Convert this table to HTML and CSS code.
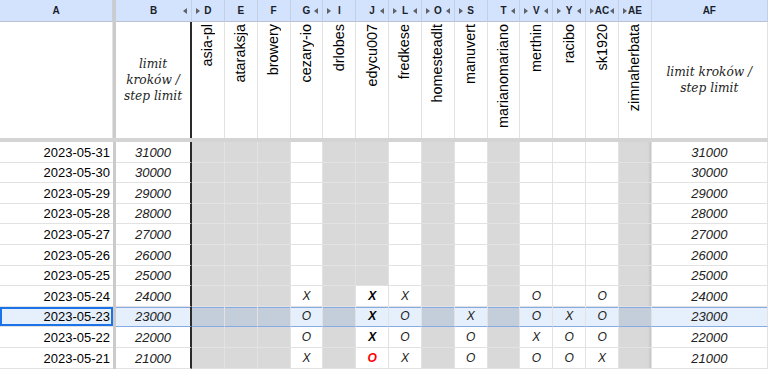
FILE: index.html
```html
<!DOCTYPE html>
<html>
<head>
<meta charset="utf-8">
<link rel="stylesheet" href="styles.css">
</head>
<body>
<div class="sheet">
  <div class="vsep"></div>
  <div class="hsep"></div>

  <div class="ch">A</div>
  <div class="ch">B<i class="tr"></i></div>
  <div class="ch"><i class="tl"></i>D</div>
  <div class="ch">E</div>
  <div class="ch">F</div>
  <div class="ch">G<i class="tr"></i></div>
  <div class="ch"><i class="tl"></i>I</div>
  <div class="ch">J<i class="tr"></i></div>
  <div class="ch"><i class="tl"></i>L<i class="tr"></i></div>
  <div class="ch"><i class="tl"></i>O<i class="tr"></i></div>
  <div class="ch"><i class="tl"></i>S</div>
  <div class="ch">T<i class="tr"></i></div>
  <div class="ch"><i class="tl"></i>V<i class="tr"></i></div>
  <div class="ch"><i class="tl"></i>Y<i class="tr"></i></div>
  <div class="ch"><i class="tl"></i>AC<i class="tr"></i></div>
  <div class="ch"><i class="tl"></i>AE</div>
  <div class="ch">AF</div>

  <div class="hc"></div>
  <div class="hc serif bb">limit kroków / step limit</div>
  <div class="hc rot"><span>asia-pl</span></div>
  <div class="hc rot"><span>ataraksja</span></div>
  <div class="hc rot"><span>browery</span></div>
  <div class="hc rot"><span>cezary-io</span></div>
  <div class="hc rot"><span>drlobes</span></div>
  <div class="hc rot"><span>edycu007</span></div>
  <div class="hc rot"><span>fredkese</span></div>
  <div class="hc rot"><span>homesteadlt</span></div>
  <div class="hc rot"><span>manuvert</span></div>
  <div class="hc rot"><span>marianomariano</span></div>
  <div class="hc rot"><span>merthin</span></div>
  <div class="hc rot"><span>racibo</span></div>
  <div class="hc rot"><span>sk1920</span></div>
  <div class="hc rot"><span>zimnaherbata</span></div>
  <div class="hc serif">limit kroków / step limit</div>

  <div class="row">
    <div class="c d">2023-05-31</div><div class="c n bb">31000</div>
    <div class="c g"></div><div class="c g"></div><div class="c g"></div><div class="c"></div><div class="c g"></div><div class="c g"></div><div class="c"></div><div class="c g"></div><div class="c"></div><div class="c g"></div><div class="c"></div><div class="c"></div><div class="c"></div><div class="c g sh"></div>
    <div class="c n">31000</div>
  </div>
  <div class="row">
    <div class="c d">2023-05-30</div><div class="c n bb">30000</div>
    <div class="c g"></div><div class="c g"></div><div class="c g"></div><div class="c"></div><div class="c g"></div><div class="c g"></div><div class="c"></div><div class="c g"></div><div class="c"></div><div class="c g"></div><div class="c"></div><div class="c"></div><div class="c"></div><div class="c g sh"></div>
    <div class="c n">30000</div>
  </div>
  <div class="row">
    <div class="c d">2023-05-29</div><div class="c n bb">29000</div>
    <div class="c g"></div><div class="c g"></div><div class="c g"></div><div class="c"></div><div class="c g"></div><div class="c g"></div><div class="c"></div><div class="c g"></div><div class="c"></div><div class="c g"></div><div class="c"></div><div class="c"></div><div class="c"></div><div class="c g sh"></div>
    <div class="c n">29000</div>
  </div>
  <div class="row">
    <div class="c d">2023-05-28</div><div class="c n bb">28000</div>
    <div class="c g"></div><div class="c g"></div><div class="c g"></div><div class="c"></div><div class="c g"></div><div class="c g"></div><div class="c"></div><div class="c g"></div><div class="c"></div><div class="c g"></div><div class="c"></div><div class="c"></div><div class="c"></div><div class="c g sh"></div>
    <div class="c n">28000</div>
  </div>
  <div class="row">
    <div class="c d">2023-05-27</div><div class="c n bb">27000</div>
    <div class="c g"></div><div class="c g"></div><div class="c g"></div><div class="c"></div><div class="c g"></div><div class="c g"></div><div class="c"></div><div class="c g"></div><div class="c"></div><div class="c g"></div><div class="c"></div><div class="c"></div><div class="c"></div><div class="c g sh"></div>
    <div class="c n">27000</div>
  </div>
  <div class="row">
    <div class="c d">2023-05-26</div><div class="c n bb">26000</div>
    <div class="c g"></div><div class="c g"></div><div class="c g"></div><div class="c"></div><div class="c g"></div><div class="c g"></div><div class="c"></div><div class="c g"></div><div class="c"></div><div class="c g"></div><div class="c"></div><div class="c"></div><div class="c"></div><div class="c g sh"></div>
    <div class="c n">26000</div>
  </div>
  <div class="row">
    <div class="c d">2023-05-25</div><div class="c n bb">25000</div>
    <div class="c g"></div><div class="c g"></div><div class="c g"></div><div class="c"></div><div class="c g"></div><div class="c g"></div><div class="c"></div><div class="c g"></div><div class="c"></div><div class="c g"></div><div class="c"></div><div class="c"></div><div class="c"></div><div class="c g sh"></div>
    <div class="c n">25000</div>
  </div>
  <div class="row">
    <div class="c d">2023-05-24</div><div class="c n bb">24000</div>
    <div class="c g"></div><div class="c g"></div><div class="c g"></div><div class="c m">X</div><div class="c g"></div><div class="c m b">X</div><div class="c m">X</div><div class="c g"></div><div class="c m"></div><div class="c g"></div><div class="c m">O</div><div class="c m"></div><div class="c m">O</div><div class="c g sh"></div>
    <div class="c n">24000</div>
  </div>
  <div class="row sel">
    <div class="c d act">2023-05-23</div><div class="c n bb">23000</div>
    <div class="c g"></div><div class="c g"></div><div class="c g"></div><div class="c m">O</div><div class="c g"></div><div class="c m b">X</div><div class="c m">O</div><div class="c g"></div><div class="c m">X</div><div class="c g"></div><div class="c m">O</div><div class="c m">X</div><div class="c m">O</div><div class="c g"></div>
    <div class="c n">23000</div>
  </div>
  <div class="row">
    <div class="c d">2023-05-22</div><div class="c n bb">22000</div>
    <div class="c g"></div><div class="c g"></div><div class="c g"></div><div class="c m">O</div><div class="c g"></div><div class="c m b">X</div><div class="c m">O</div><div class="c g"></div><div class="c m">O</div><div class="c g"></div><div class="c m">X</div><div class="c m">O</div><div class="c m">O</div><div class="c g sh"></div>
    <div class="c n">22000</div>
  </div>
  <div class="row">
    <div class="c d">2023-05-21</div><div class="c n bb">21000</div>
    <div class="c g"></div><div class="c g"></div><div class="c g"></div><div class="c m">X</div><div class="c g"></div><div class="c m b red">O</div><div class="c m">X</div><div class="c g"></div><div class="c m">O</div><div class="c g"></div><div class="c m">O</div><div class="c m">O</div><div class="c m">X</div><div class="c g sh"></div>
    <div class="c n">21000</div>
  </div>
</div>
</body>
</html>
```
FILE: styles.css
```css
html, body {
  margin: 0;
  padding: 0;
  background: #ffffff;
}
.sheet {
  width: 768px;
  height: 369px;
  overflow: hidden;
  display: grid;
  grid-template-columns: 113px 3px 76px repeat(14, 32.857px) 116px;
  grid-template-rows: 22px 116px 4px repeat(11, 20.6px);
  font-family: "Liberation Sans", Arial, sans-serif;
  color: #000;
}
.vsep {
  grid-column: 2;
  grid-row: 1 / -1;
  background: #cbcbcb;
}
.hsep {
  grid-column: 1 / -1;
  grid-row: 3;
  background: #d4d4d4;
}
.ch {
  position: relative;
  box-sizing: border-box;
  background: #d3e3fd;
  border-right: 1px solid #c3cfe2;
  border-bottom: 1px solid #b8c2d0;
  display: flex;
  align-items: center;
  justify-content: center;
  font-size: 10px;
  font-weight: bold;
  color: #1a1f2b;
}
.ch .tl, .ch .tr {
  position: absolute;
  top: 8px;
  width: 0;
  height: 0;
  border-top: 3px solid transparent;
  border-bottom: 3px solid transparent;
}
.ch .tl {
  left: 4px;
  border-left: 4px solid #5f6368;
}
.ch .tr {
  right: 4px;
  border-right: 4px solid #5f6368;
}
.hc {
  box-sizing: border-box;
  border-right: 1px solid #e2e2e2;
  background: #fff;
}
.serif {
  display: flex;
  align-items: center;
  justify-content: center;
  text-align: center;
  padding: 0 4px;
  font-family: "DejaVu Serif", "Liberation Serif", serif;
  font-style: italic;
  font-size: 12.2px;
  line-height: 16px;
  color: #1e1e1e;
}
.rot {
  display: flex;
  justify-content: center;
  align-items: flex-start;
  padding-top: 2px;
}
.rot span {
  writing-mode: vertical-rl;
  transform: rotate(180deg);
  font-size: 14.4px;
  line-height: 15px;
  white-space: nowrap;
}
.row {
  display: contents;
}
.c {
  box-sizing: border-box;
  border-right: 1px solid #e2e2e2;
  border-bottom: 1px solid #e2e2e2;
  background: #fff;
  font-size: 13px;
  line-height: 15px;
  display: flex;
  align-items: flex-end;
  justify-content: center;
  padding-bottom: 2px;
  overflow: hidden;
  white-space: nowrap;
}
.c.g {
  background: #d9d9d9;
}
.c.sh {
  box-shadow: inset -3px 0 3px -2px rgba(0, 0, 0, 0.12);
}
.c.d {
  justify-content: flex-end;
  padding-right: 3px;
  border-right: none;
}
.bb {
  border-right: 2px solid #2b2b2b !important;
}
.c.n {
  font-style: italic;
  color: #222;
}
.c.m {
  font-style: italic;
  font-size: 12px;
  color: #222;
}
.c.b {
  font-weight: bold;
  color: #000;
}
.c.red {
  color: #ff0000;
}
.sel > .c {
  background-image: linear-gradient(rgba(26, 115, 232, 0.11), rgba(26, 115, 232, 0.11));
  box-shadow: inset 0 1px 0 #86aae4;
  border-bottom-color: #86aae4;
}
.sel > .c.act {
  box-shadow: inset 0 0 0 2px #1a73e8;
  border-bottom-color: #e2e2e2;
}
```
